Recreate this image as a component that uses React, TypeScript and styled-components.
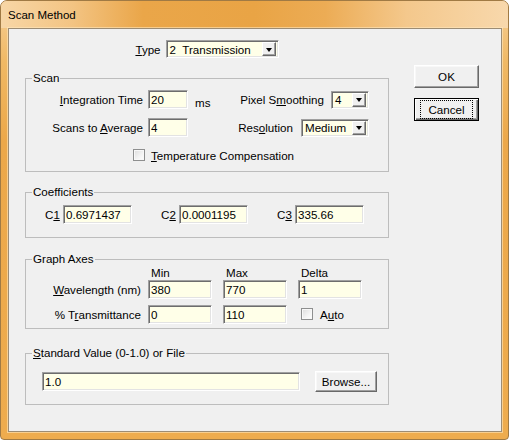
import React from "react";
import styled, { createGlobalStyle } from "styled-components";

const GlobalStyle = createGlobalStyle`
  html, body {
    margin: 0;
    padding: 0;
    background: #ffffff;
  }
  body {
    font-family: "Liberation Sans", Arial, sans-serif;
    font-size: 11.6px;
    color: #000;
  }
`;

const Window = styled.div`
  box-sizing: border-box;
  width: 509px;
  height: 440px;
  display: flex;
  flex-direction: column;
  border: 1px solid #a07a44;
  border-radius: 7px 7px 4px 4px;
  background: linear-gradient(
    180deg,
    #f5cf98 0px,
    #f0b965 60px,
    #eca84a 140px,
    #eeac4e 100%
  );
  overflow: hidden;
`;

const TitleBar = styled.div`
  height: 27px;
  display: flex;
  align-items: center;
  padding-left: 7px;
  background: linear-gradient(
    90deg,
    #f7d6a6 0%,
    #f3c483 14%,
    #eaa649 28%,
    #e9a445 50%,
    #ecac55 64%,
    #f4c88c 80%,
    #f8d8ac 100%
  );
`;

const Title = styled.span`
  font-size: 11.5px;
  color: #000;
`;

const Frame = styled.div`
  flex: 1;
  display: flex;
  padding: 0 6px 7px 7px;
`;

const Client = styled.div`
  flex: 1;
  display: flex;
  gap: 25px;
  padding: 11px 0 0 16px;
  background: #f0f0f0;
  border: 1px solid #9c8c74;
  box-shadow: 0 0 0 1px rgba(255, 232, 190, 0.6);
`;

const MainCol = styled.div`
  width: 364px;
  display: flex;
  flex-direction: column;
`;

const SideCol = styled.div`
  display: flex;
  flex-direction: column;
  gap: 10px;
  padding-top: 25px;
`;

const U = styled.span`
  text-decoration: underline;
`;

const TypeRow = styled.div`
  display: flex;
  justify-content: center;
  align-items: center;
  height: 18px;
  gap: 5px;
`;

const Group = styled.fieldset<{ gap: number }>`
  margin: ${(p) => p.gap}px 0 0 0;
  padding: 0;
  min-width: 0;
  border: 1px solid #bdbdbd;
  border-radius: 0;
`;

const Caption = styled.legend`
  margin-left: 6px;
  padding: 0 1px;
  line-height: 14px;
  font-size: 11.6px;
`;

const Field = styled.input<{ w: number }>`
  box-sizing: border-box;
  width: ${(p) => p.w}px;
  height: 19px;
  margin: 0;
  padding: 0 0 0 2px;
  font-family: "Liberation Sans", Arial, sans-serif;
  font-size: 11.6px;
  color: #000;
  background: #ffffe8;
  border: 1px solid;
  border-color: #a0a0a0 #ffffff #ffffff #a0a0a0;
  box-shadow: inset 1px 1px 0 #6d6d6d, inset -1px -1px 0 #e3e3e3;
  outline: none;
`;

const Combo = styled.div<{ w: number }>`
  box-sizing: border-box;
  width: ${(p) => p.w}px;
  height: 18px;
  display: flex;
  align-items: center;
  justify-content: space-between;
  padding: 0 2px 0 3px;
  background: #ffffe8;
  border: 1px solid;
  border-color: #a0a0a0 #ffffff #ffffff #a0a0a0;
  box-shadow: inset 1px 1px 0 #6d6d6d, inset -1px -1px 0 #e3e3e3;
  white-space: pre;
`;

const DropButton = styled.span`
  box-sizing: border-box;
  width: 14px;
  height: 14px;
  display: flex;
  align-items: center;
  justify-content: center;
  background: #f0f0f0;
  border: 1px solid;
  border-color: #ffffff #696969 #696969 #ffffff;
  box-shadow: inset -1px -1px 0 #a0a0a0;
  &::after {
    content: "";
    width: 0;
    height: 0;
    border-left: 3.5px solid transparent;
    border-right: 3.5px solid transparent;
    border-top: 4px solid #000;
    margin-top: 1px;
  }
`;

const ScanBody = styled.div`
  display: flex;
  flex-direction: column;
  padding: 5px 19px 9px 0;
`;

const Row = styled.div<{ mt?: number }>`
  display: flex;
  align-items: center;
  height: 19px;
  margin-top: ${(p) => p.mt ?? 0}px;
`;

const RightLabel = styled.span<{ w: number }>`
  width: ${(p) => p.w}px;
  text-align: right;
  padding-right: 5px;
  box-sizing: border-box;
`;

const Unit = styled.span`
  margin-left: 7px;
  padding-top: 5px;
`;

const Spacer = styled.span`
  flex: 1;
`;

const PairLabel = styled.span<{ gap: number }>`
  margin-right: ${(p) => p.gap}px;
`;

const CheckRow = styled.label<{ pl: number; mt?: number }>`
  display: flex;
  align-items: center;
  gap: 6px;
  height: 14px;
  padding-left: ${(p) => p.pl}px;
  margin-top: ${(p) => p.mt ?? 0}px;
`;

const CheckBox = styled.span`
  box-sizing: border-box;
  width: 12px;
  height: 12px;
  border: 1px solid #8e8f8f;
  background: linear-gradient(135deg, #dcdcdc 0%, #f4f4f4 60%, #ffffff 100%);
  box-shadow: inset 0 0 0 1px #f8f8f8;
`;

const CoefRow = styled.div`
  display: flex;
  gap: 29px;
  padding: 6px 0 13px 19px;
`;

const CoefCell = styled.div`
  display: flex;
  align-items: center;
`;

const CoefLabel = styled.span`
  width: 18px;
`;

const AxesGrid = styled.div`
  display: grid;
  grid-template-columns: 122px 75px 75px auto;
  grid-template-rows: 14px 19px 19px;
  align-items: center;
  padding-bottom: 10px;
  & > :nth-child(n + 9) {
    margin-top: 11px;
  }
`;

const AxisHead = styled.span`
  padding-left: 3px;
  line-height: 14px;
`;

const AxisLabel = styled.span`
  text-align: right;
  padding-right: 7px;
`;

const AxisCheck = styled(CheckRow)`
  gap: 7px;
`;

const StdRow = styled.div`
  display: flex;
  align-items: center;
  gap: 15px;
  padding: 11px 0 12px 16px;
`;

const Button = styled.button<{ w: number; h: number; primary?: boolean }>`
  box-sizing: border-box;
  width: ${(p) => p.w}px;
  height: ${(p) => p.h}px;
  margin: 0;
  padding: 0;
  font-family: "Liberation Sans", Arial, sans-serif;
  font-size: 11.6px;
  color: #000;
  background: #f0f0f0;
  border: 1px solid;
  border-color: ${(p) =>
    p.primary ? "#000" : "#ffffff #696969 #696969 #ffffff"};
  box-shadow: ${(p) =>
    p.primary
      ? "inset 1px 1px 0 #fff, inset -1px -1px 0 #696969, inset -2px -2px 0 #a0a0a0"
      : "inset -1px -1px 0 #a0a0a0, inset 1px 1px 0 #f8f8f8"};
  display: flex;
  align-items: center;
  justify-content: center;
`;

const FocusText = styled.span`
  padding: 1px 6px;
  outline: 1px dotted #000;
  outline-offset: 1px;
  line-height: 13px;
`;

export default function App() {
  return (
    <>
      <GlobalStyle />
      <Window>
        <TitleBar>
          <Title>Scan Method</Title>
        </TitleBar>
        <Frame>
          <Client>
            <MainCol>
              <TypeRow>
                <span>
                  <U>T</U>ype
                </span>
                <Combo w={113}>
                  <span>2  Transmission</span>
                  <DropButton />
                </Combo>
              </TypeRow>

              <Group gap={13}>
                <Caption>Scan</Caption>
                <ScanBody>
                  <Row>
                    <RightLabel w={122}>
                      <U>I</U>ntegration Time
                    </RightLabel>
                    <Field w={40} defaultValue="20" />
                    <Unit>ms</Unit>
                    <Spacer />
                    <PairLabel gap={7}>
                      Pixel S<U>m</U>oothing
                    </PairLabel>
                    <Combo w={38}>
                      <span>4</span>
                      <DropButton />
                    </Combo>
                  </Row>
                  <Row mt={9}>
                    <RightLabel w={122}>
                      Scans to <U>A</U>verage
                    </RightLabel>
                    <Field w={40} defaultValue="4" />
                    <Spacer />
                    <PairLabel gap={8}>
                      Res<U>o</U>lution
                    </PairLabel>
                    <Combo w={68}>
                      <span>Medium</span>
                      <DropButton />
                    </Combo>
                  </Row>
                  <CheckRow pl={107} mt={11}>
                    <CheckBox />
                    <span>
                      <U>T</U>emperature Compensation
                    </span>
                  </CheckRow>
                </ScanBody>
              </Group>

              <Group gap={13}>
                <Caption>Coefficients</Caption>
                <CoefRow>
                  <CoefCell>
                    <CoefLabel>
                      C<U>1</U>
                    </CoefLabel>
                    <Field w={69} defaultValue="0.6971437" />
                  </CoefCell>
                  <CoefCell>
                    <CoefLabel>
                      C<U>2</U>
                    </CoefLabel>
                    <Field w={69} defaultValue="0.0001195" />
                  </CoefCell>
                  <CoefCell>
                    <CoefLabel>
                      C<U>3</U>
                    </CoefLabel>
                    <Field w={69} defaultValue="335.66" />
                  </CoefCell>
                </CoefRow>
              </Group>

              <Group gap={14}>
                <Caption>Graph Axes</Caption>
                <AxesGrid>
                  <span />
                  <AxisHead>Min</AxisHead>
                  <AxisHead>Max</AxisHead>
                  <AxisHead>Delta</AxisHead>

                  <AxisLabel>
                    <U>W</U>avelength (nm)
                  </AxisLabel>
                  <Field w={64} defaultValue="380" />
                  <Field w={64} defaultValue="770" />
                  <Field w={64} defaultValue="1" />

                  <AxisLabel>
                    % T<U>r</U>ansmittance
                  </AxisLabel>
                  <Field w={64} defaultValue="0" />
                  <Field w={64} defaultValue="110" />
                  <AxisCheck pl={3}>
                    <CheckBox />
                    <span>
                      A<U>u</U>to
                    </span>
                  </AxisCheck>
                </AxesGrid>
              </Group>

              <Group gap={17}>
                <Caption>
                  <U>S</U>tandard Value (0-1.0) or File
                </Caption>
                <StdRow>
                  <Field w={258} defaultValue="1.0" />
                  <Button w={62} h={21}>
                    Browse...
                  </Button>
                </StdRow>
              </Group>
            </MainCol>

            <SideCol>
              <Button w={65} h={23}>
                OK
              </Button>
              <Button w={65} h={23} primary>
                <FocusText>Cancel</FocusText>
              </Button>
            </SideCol>
          </Client>
        </Frame>
      </Window>
    </>
  );
}
